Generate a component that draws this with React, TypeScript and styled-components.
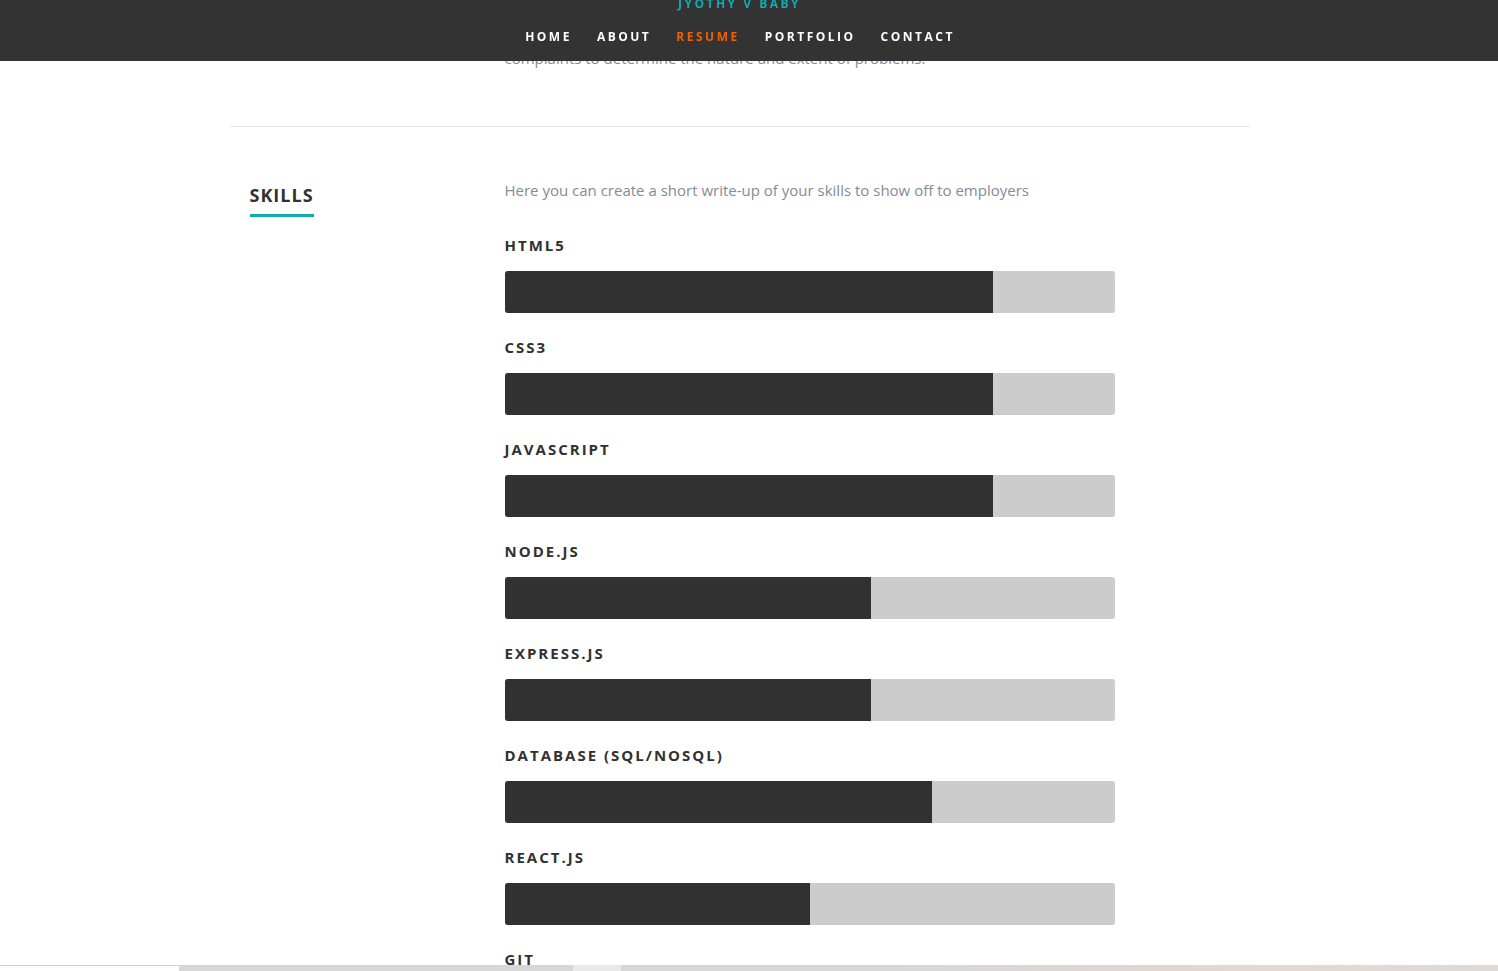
import React from "react";
import styled, { createGlobalStyle } from "styled-components";

const GlobalStyle = createGlobalStyle`
  html, body {
    margin: 0;
    padding: 0;
    background: #fff;
    font-family: "Open Sans", "Liberation Sans", sans-serif;
    overflow: hidden;
  }
`;

const Page = styled.div`
  padding-right: 19px;
`;

const Header = styled.header`
  position: fixed;
  top: 0;
  left: 0;
  right: 19px;
  height: 61px;
  background: #333333;
  display: flex;
  flex-direction: column;
  align-items: center;
  z-index: 10;
`;

const HeaderFill = styled.div`
  position: fixed;
  top: 0;
  right: 0;
  width: 19px;
  height: 61px;
  background: #333333;
  z-index: 10;
`;

const Name = styled.div`
  color: #11abb0;
  font-size: 12px;
  font-weight: 700;
  letter-spacing: 2.5px;
  line-height: 8px;
  text-transform: uppercase;
`;

const Nav = styled.nav`
  display: flex;
  margin-top: 19px;
`;

const NavItem = styled.a<{ $current?: boolean }>`
  padding: 0 12px 0 13px;
  font-size: 12px;
  line-height: 20px;
  font-weight: 700;
  letter-spacing: 2.5px;
  text-transform: uppercase;
  text-decoration: none;
  color: ${p => (p.$current ? "#f06000" : "#ffffff")};
`;

const Row = styled.section`
  width: 1020px;
  margin: 0 auto;
`;

const TopBlock = styled(Row)`
  padding: 46px 0 56px;
  border-bottom: 1px solid #e8e8e8;
  display: flex;
`;

const Text = styled.p`
  margin: 0;
  font-size: 15px;
  line-height: 24px;
  color: #838c95;
`;

const SkillsRow = styled(Row)`
  display: flex;
  padding-top: 51px;
`;

const LeftCol = styled.div`
  width: 255px;
  box-sizing: border-box;
  padding: 6px 20px 0;
`;

const RightCol = styled.div`
  width: 765px;
  box-sizing: border-box;
  padding: 0 20px;
  display: flex;
  flex-direction: column;
`;

const Heading = styled.h1`
  margin: 0;
  display: flex;
`;

const HeadingText = styled.span`
  font-size: 18px;
  line-height: 22px;
  font-weight: 700;
  letter-spacing: 1px;
  color: #313131;
  text-transform: uppercase;
  padding-bottom: 8px;
  border-bottom: 3px solid #11abb0;
`;

const Intro = styled(Text)`
  margin-bottom: 34px;
`;

const SkillList = styled.ul`
  list-style: none;
  margin: 0;
  padding: 0;
  width: 610px;
`;

const SkillItem = styled.li`
  margin-bottom: 25px;
`;

const SkillName = styled.em`
  display: block;
  font-style: normal;
  font-size: 15px;
  line-height: 18px;
  font-weight: 700;
  letter-spacing: 2px;
  color: #313131;
  text-transform: uppercase;
  margin-bottom: 17px;
`;

const Bar = styled.div`
  height: 42px;
  background: #cccccc;
  border-radius: 3px;
  overflow: hidden;
`;

const BarFill = styled.div`
  height: 100%;
  background: #313131;
`;

const BottomStrip = styled.div`
  position: fixed;
  left: 0;
  right: 0;
  bottom: 0;
  height: 6px;
  display: flex;
  z-index: 20;
`;

const StripEdge = styled.div`
  width: 179px;
  background: #fff;
  border-top: 1px solid #cfcfcf;
`;

const StripBand = styled.div`
  flex: 1;
  display: flex;
  background: linear-gradient(90deg, #d7d7d9 0%, #d7d7d9 55%, #e3d6d0 75%, #e4d8d3 90%, #dcd9d6 100%);
`;

const StripThumb = styled.div`
  margin-left: 394px;
  width: 48px;
  background: #e9e9eb;
`;

const skills = [
  { name: "HTML5", level: 80 },
  { name: "CSS3", level: 80 },
  { name: "JavaScript", level: 80 },
  { name: "Node.js", level: 60 },
  { name: "Express.js", level: 60 },
  { name: "Database (SQL/NoSQL)", level: 70 },
  { name: "React.js", level: 50 },
  { name: "Git", level: 80 },
];

const navLinks = ["Home", "About", "Resume", "Portfolio", "Contact"];

export default function App() {
  return (
    <Page>
      <GlobalStyle />
      <Header>
        <Name>Jyothy V Baby</Name>
        <Nav>
          {navLinks.map(link => (
            <NavItem key={link} href="#" $current={link === "Resume"}>
              {link}
            </NavItem>
          ))}
        </Nav>
      </Header>
      <HeaderFill />

      <TopBlock>
        <LeftCol />
        <RightCol>
          <Text>complaints to determine the nature and extent of problems.</Text>
        </RightCol>
      </TopBlock>

      <SkillsRow>
        <LeftCol>
          <Heading>
            <HeadingText>Skills</HeadingText>
          </Heading>
        </LeftCol>
        <RightCol>
          <Intro>Here you can create a short write-up of your skills to show off to employers</Intro>
          <SkillList>
            {skills.map(skill => (
              <SkillItem key={skill.name}>
                <SkillName>{skill.name}</SkillName>
                <Bar>
                  <BarFill style={{ width: `${skill.level}%` }} />
                </Bar>
              </SkillItem>
            ))}
          </SkillList>
        </RightCol>
      </SkillsRow>

      <BottomStrip>
        <StripEdge />
        <StripBand>
          <StripThumb />
        </StripBand>
      </BottomStrip>
    </Page>
  );
}
